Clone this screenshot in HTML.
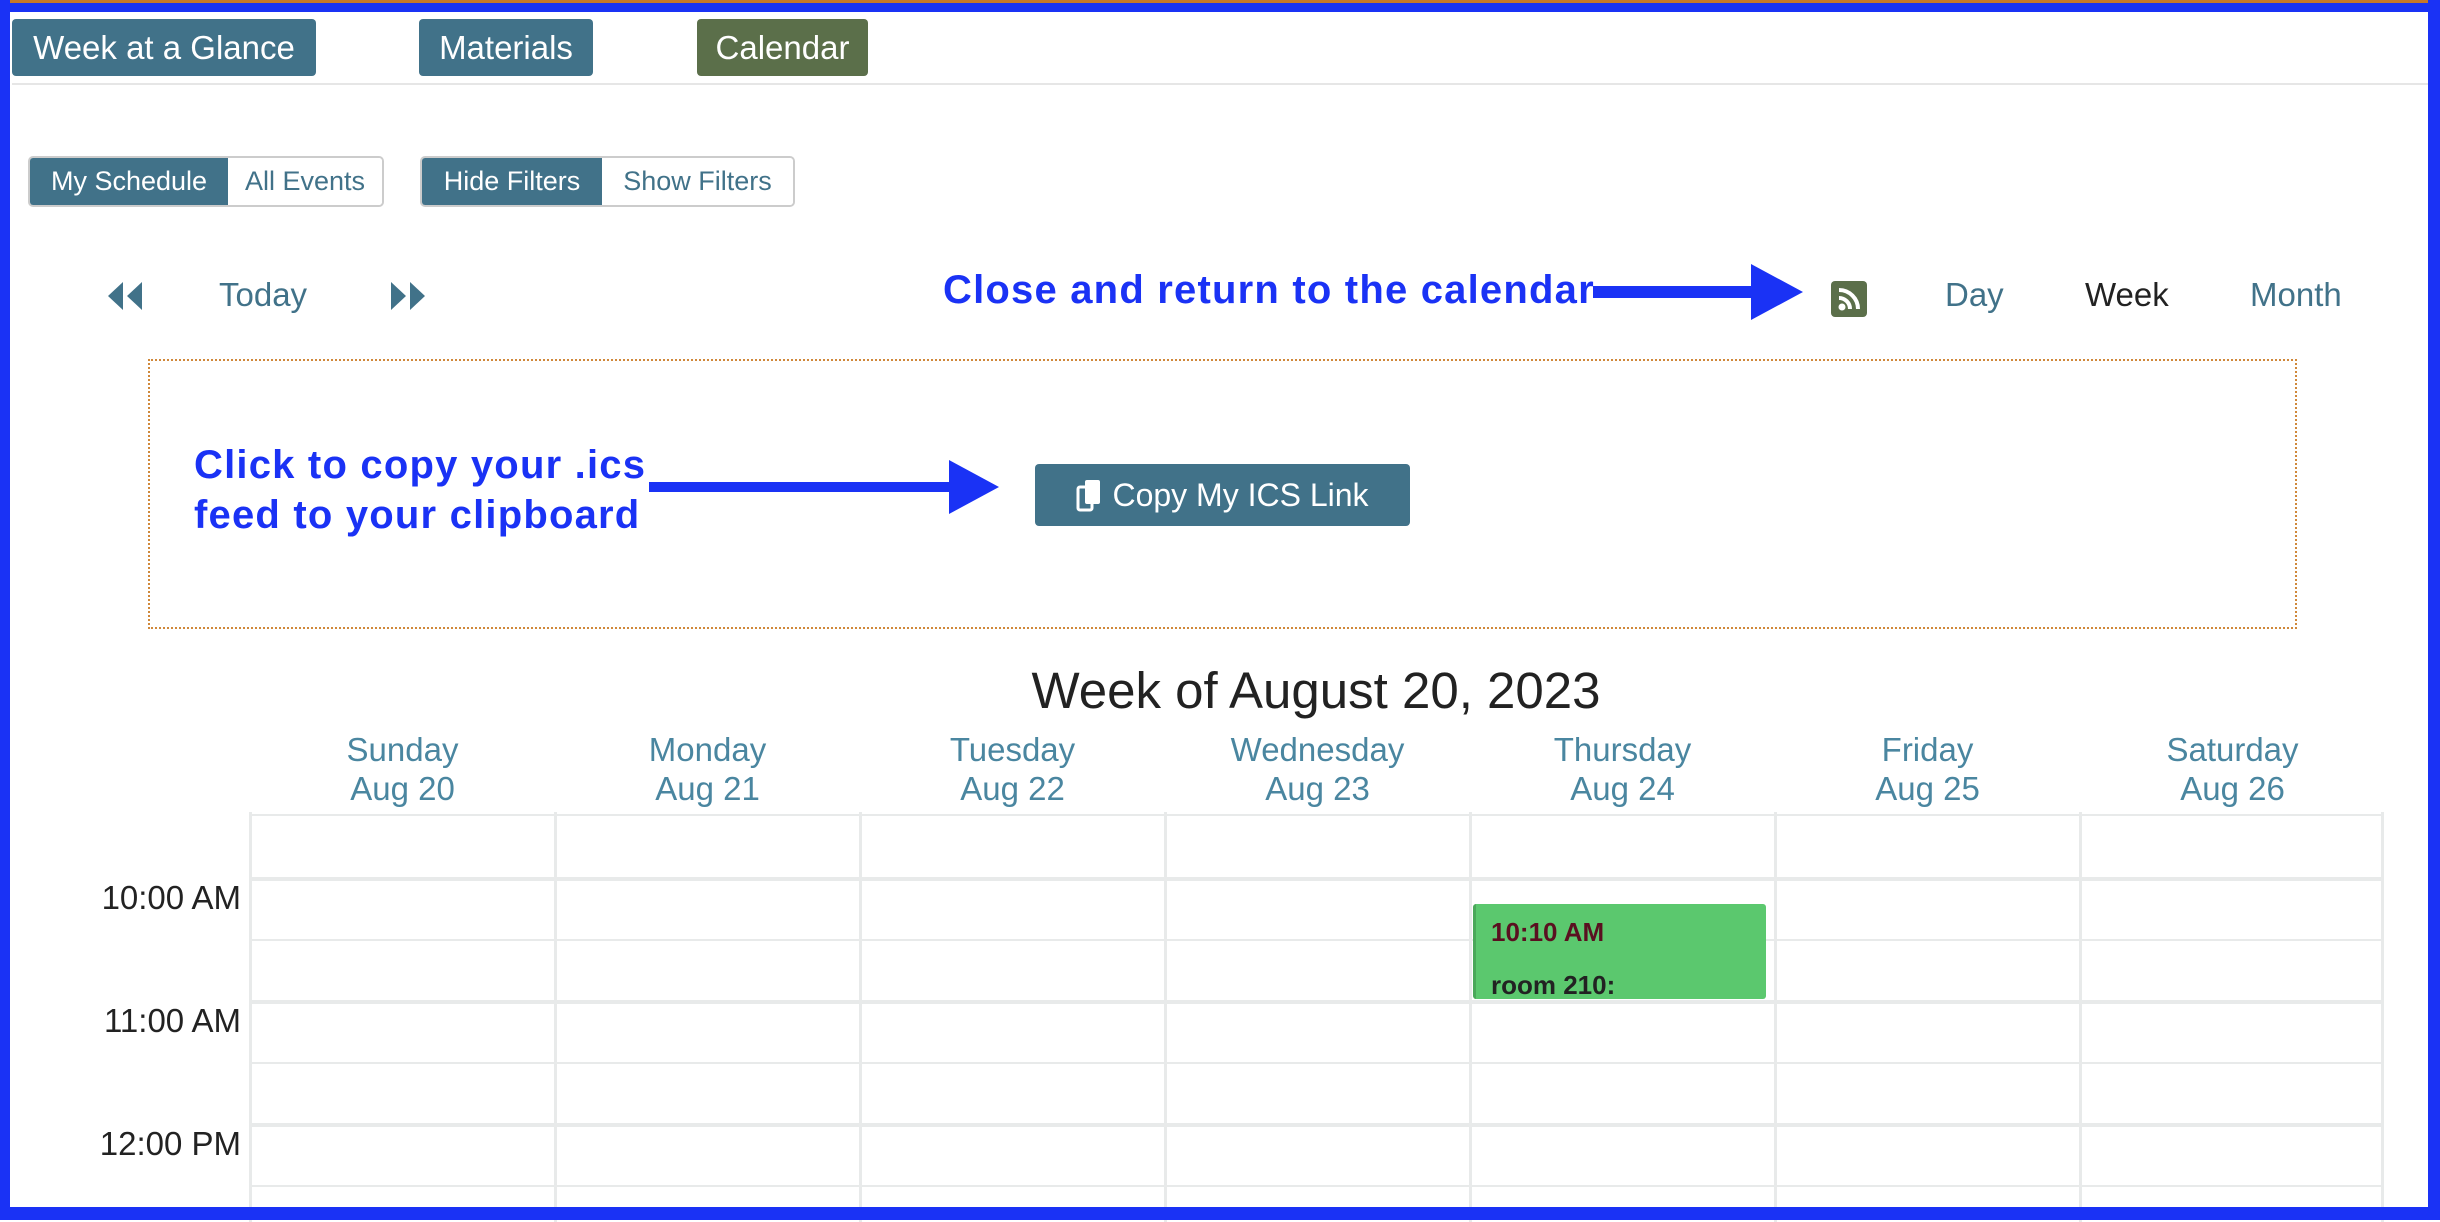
<!DOCTYPE html>
<html><head><meta charset="utf-8"><style>
*{box-sizing:border-box;margin:0;padding:0}
html,body{width:2440px;height:1220px;overflow:hidden;background:#fff;font-family:"Liberation Sans",sans-serif}
.abs{position:absolute}
.tab{position:absolute;top:19px;height:57px;background:#417289;color:#fff;font-size:33px;border-radius:4px;display:flex;align-items:center;justify-content:center}
.grp{position:absolute;top:156px;height:51px;border:2px solid #ccc;border-radius:5px;display:flex;overflow:hidden;font-size:27px}
.grp div{display:flex;align-items:center;justify-content:center}
.on{background:#417289;color:#fff}
.off{background:#fff;color:#417289}
.nav{position:absolute;top:276px;font-size:33px;color:#417289}
.blue{color:#1a32f5;font-weight:bold;font-size:40px;letter-spacing:1.2px;position:absolute}
.hdr{position:absolute;top:730px;width:305px;text-align:center;color:#4a86a0;font-size:33px;line-height:39px}
.hl{position:absolute;left:250px;width:2132px;background:#e8eaea}
.vl{position:absolute;top:812px;height:410px;width:3px;background:#e8eaea}
.tm{position:absolute;right:2199px;font-size:33px;color:#222}
</style></head><body>
<div class="abs" style="left:0;top:0;width:2440px;height:3px;background:#c8782a"></div>
<div class="tab" style="left:12px;width:304px">Week at a Glance</div>
<div class="tab" style="left:419px;width:174px">Materials</div>
<div class="tab" style="left:697px;width:171px;background:#5b6f4a">Calendar</div>
<div class="abs" style="left:12px;top:83px;width:2416px;height:2px;background:#e6e6e6"></div>

<div class="grp" style="left:28px;width:356px"><div class="on" style="width:198px">My Schedule</div><div class="off" style="flex:1">All Events</div></div>
<div class="grp" style="left:420px;width:375px"><div class="on" style="width:180px">Hide Filters</div><div class="off" style="flex:1">Show Filters</div></div>

<svg class="abs" style="left:106px;top:282px" width="38" height="28" viewBox="0 0 38 28"><path d="M17 0V28L2 14Z M36 0V28L21 14Z" fill="#417289"/></svg>
<div class="nav" style="left:219px">Today</div>
<svg class="abs" style="left:389px;top:282px" width="38" height="28" viewBox="0 0 38 28"><path d="M2 0V28L17 14Z M21 0V28L36 14Z" fill="#417289"/></svg>

<div class="blue" style="left:943px;top:268px">Close and return to the calendar</div>
<svg class="abs" style="left:1593px;top:264px" width="212" height="56"><rect x="0" y="22" width="160" height="12" fill="#1a32f5"/><path d="M158 0L210 28L158 56Z" fill="#1a32f5"/></svg>
<svg class="abs" style="left:1831px;top:281px" width="36" height="36" viewBox="0 0 36 36"><rect width="36" height="36" rx="4" fill="#5b6f4a"/><circle cx="11" cy="26" r="3.5" fill="#fff"/><path d="M8 17a11 11 0 0 1 11 11M8 9a19 19 0 0 1 19 19" stroke="#fff" stroke-width="4" fill="none"/></svg>
<div class="nav" style="left:1945px">Day</div>
<div class="nav" style="left:2085px;color:#222">Week</div>
<div class="nav" style="left:2250px">Month</div>

<div class="abs" style="left:148px;top:359px;width:2149px;height:270px;border:2px dotted #d0883a"></div>
<div class="blue" style="left:194px;top:440px;line-height:50px">Click to copy your .ics<br>feed to your clipboard</div>
<svg class="abs" style="left:649px;top:460px" width="352" height="56"><rect x="0" y="22" width="302" height="10" fill="#1a32f5"/><path d="M300 0L350 27L300 54Z" fill="#1a32f5"/></svg>
<div class="abs" style="left:1035px;top:464px;width:375px;height:62px;background:#417289;border-radius:4px;color:#fff;font-size:32px;display:flex;align-items:center;justify-content:center">
<svg width="26" height="34" viewBox="0 0 26 34" style="margin-right:10px"><rect x="2" y="9" width="14" height="23" rx="2" fill="none" stroke="#fff" stroke-width="3"/><rect x="9" y="2" width="15" height="24" rx="2" fill="#fff"/></svg>Copy My ICS Link</div>

<div class="abs" style="left:0;width:2440px;top:661px;text-align:center;font-size:51px;color:#222;padding-left:192px">Week of August 20, 2023</div>

<div class="hdr" style="left:250px">Sunday<br>Aug 20</div>
<div class="hdr" style="left:555px">Monday<br>Aug 21</div>
<div class="hdr" style="left:860px">Tuesday<br>Aug 22</div>
<div class="hdr" style="left:1165px">Wednesday<br>Aug 23</div>
<div class="hdr" style="left:1470px">Thursday<br>Aug 24</div>
<div class="hdr" style="left:1775px">Friday<br>Aug 25</div>
<div class="hdr" style="left:2080px">Saturday<br>Aug 26</div>

<div class="hl" style="top:814px;height:2px"></div>
<div class="hl" style="top:877px;height:4px"></div>
<div class="hl" style="top:939px;height:2px"></div>
<div class="hl" style="top:1000px;height:4px"></div>
<div class="hl" style="top:1062px;height:2px"></div>
<div class="hl" style="top:1123px;height:4px"></div>
<div class="hl" style="top:1185px;height:2px"></div>
<div class="vl" style="left:249px"></div>
<div class="vl" style="left:554px"></div>
<div class="vl" style="left:859px"></div>
<div class="vl" style="left:1164px"></div>
<div class="vl" style="left:1469px"></div>
<div class="vl" style="left:1774px"></div>
<div class="vl" style="left:2079px"></div>
<div class="vl" style="left:2381px"></div>

<div class="tm" style="top:879px">10:00 AM</div>
<div class="tm" style="top:1002px">11:00 AM</div>
<div class="tm" style="top:1125px">12:00 PM</div>

<div class="abs" style="left:1473px;top:904px;width:293px;height:95px;background:#5bc86e;border-left:3px solid #4aa85a;border-radius:3px;font-weight:bold;font-size:26px;padding-left:15px">
<div style="color:#5a1020;margin-top:13px">10:10 AM</div>
<div style="color:#222;margin-top:22px">room 210:</div></div>

<div class="abs" style="left:0;top:0;width:10px;height:1220px;background:#1a32f5"></div>
<div class="abs" style="left:2428px;top:0;width:12px;height:1220px;background:#1a32f5"></div>
<div class="abs" style="left:0;top:3px;width:2440px;height:9px;background:#1a32f5"></div>
<div class="abs" style="left:0;top:1207px;width:2440px;height:13px;background:#1a32f5"></div>
</body></html>
